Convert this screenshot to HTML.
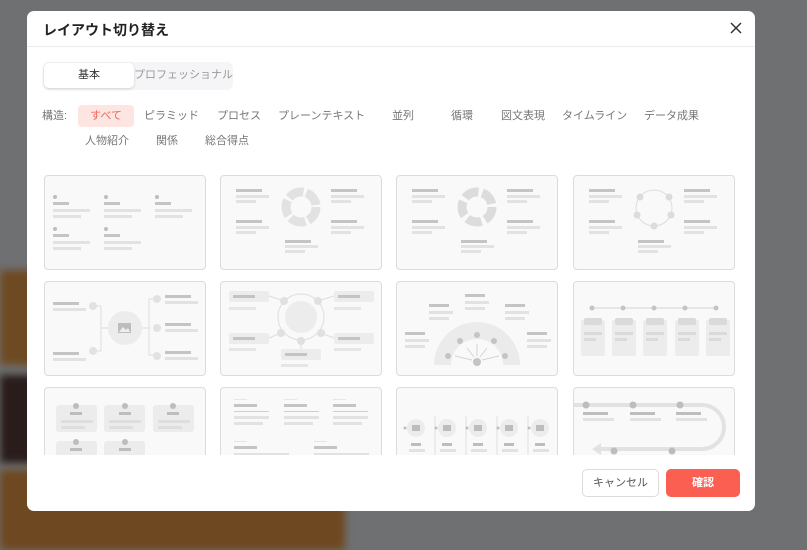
<!DOCTYPE html>
<html><head><meta charset="utf-8"><style>
*{margin:0;padding:0;box-sizing:border-box}
body{width:807px;height:546px;overflow:hidden;position:relative;background:#6f7072;font-family:"Liberation Sans","Noto Sans CJK JP",sans-serif}
.bg{position:absolute;filter:blur(4px)}
.modal{position:absolute;left:27px;top:11px;width:728px;height:500px;background:#fff;border-radius:7px;overflow:hidden}
.title{position:absolute;left:16px;top:9px;font-size:14px;font-weight:bold;color:#222}
.close{position:absolute;left:702px;top:10px}
.hr{position:absolute;left:0;top:35px;width:728px;height:1px;background:#ececec}
.tabs{position:absolute;left:16px;top:51px;width:190px;height:28px;background:#f5f5f7;border-radius:6px}
.tab1{position:absolute;left:1px;top:1px;width:90px;height:25px;background:#fff;border-radius:5px;box-shadow:0 1px 3px rgba(0,0,0,.15);font-size:11px;color:#333;text-align:center;line-height:25px}
.tab2{position:absolute;left:91px;top:0;font-size:11px;color:#999;line-height:27px}
.f{position:absolute;font-size:11px;color:#777;line-height:22px;white-space:nowrap}
.sel{background:#fde5e1;color:#f0675a;border-radius:4px;width:56px;text-align:center}
.grid{position:absolute;left:0;top:160px;width:728px;height:284px;overflow:hidden}
.card{position:absolute;width:162px;height:95px;background:#f9f9f9;border:1px solid #dcdcdc;border-radius:4px;overflow:hidden}
.card svg{position:absolute;left:0;top:0}
.btn{position:absolute;top:458px;height:28px;border-radius:5px;font-size:11px;text-align:center;line-height:26px}
</style></head><body>
<div class="bg" style="left:0;top:270px;width:40px;height:95px;background:#6e4a22"></div>
<div class="bg" style="left:0;top:375px;width:40px;height:88px;background:#2a1c1a"></div>
<div class="bg" style="left:0;top:470px;width:345px;height:80px;background:#6e4820"></div>

<div class="modal">
<div class="title">レイアウト切り替え</div>
<svg class="close" width="14" height="14" viewBox="0 0 14 14"><path d="M2 2L12 12M12 2L2 12" stroke="#333" stroke-width="1.5"/></svg>
<div class="hr"></div>
<div class="tabs"><div class="tab1">基本</div><div class="tab2">プロフェッショナル</div></div>
<div class="f" style="left:15px;top:94px">構造:</div>
<div class="f sel" style="left:51px;top:94px">すべて</div>
<div class="f" style="left:117px;top:94px">ピラミッド</div>
<div class="f" style="left:190px;top:94px">プロセス</div>
<div class="f" style="left:251px;top:94px">プレーンテキスト</div>
<div class="f" style="left:365px;top:94px">並列</div>
<div class="f" style="left:424px;top:94px">循環</div>
<div class="f" style="left:474px;top:94px">図文表現</div>
<div class="f" style="left:535px;top:94px">タイムライン</div>
<div class="f" style="left:617px;top:94px">データ成果</div>
<div class="f" style="left:58px;top:119px">人物紹介</div>
<div class="f" style="left:129px;top:119px">関係</div>
<div class="f" style="left:178px;top:119px">総合得点</div>

<div class="grid">
<!-- row1 -->
<div class="card" style="left:17px;top:4px"><svg width="162" height="95">
<g fill="#bdbdbd"><circle cx="10" cy="21" r="2"/><circle cx="61" cy="21" r="2"/><circle cx="112" cy="21" r="2"/><circle cx="10" cy="53" r="2"/><circle cx="61" cy="53" r="2"/></g>
<g fill="#c4c4c4"><rect x="8" y="26" width="16" height="3"/><rect x="59" y="26" width="16" height="3"/><rect x="110" y="26" width="16" height="3"/><rect x="8" y="58" width="16" height="3"/><rect x="59" y="58" width="16" height="3"/></g>
<g fill="#e2e2e2"><rect x="8" y="33" width="37" height="3"/><rect x="8" y="39" width="28" height="3"/><rect x="59" y="33" width="37" height="3"/><rect x="59" y="39" width="28" height="3"/><rect x="110" y="33" width="37" height="3"/><rect x="110" y="39" width="28" height="3"/><rect x="8" y="65" width="37" height="3"/><rect x="8" y="71" width="28" height="3"/><rect x="59" y="65" width="37" height="3"/><rect x="59" y="71" width="28" height="3"/></g></svg></div>

<div class="card" style="left:193px;top:4px"><svg width="162" height="95">
<g fill="#c4c4c4"><rect x="15" y="13" width="26" height="3"/><rect x="15" y="44" width="26" height="3"/><rect x="110" y="13" width="26" height="3"/><rect x="110" y="44" width="26" height="3"/><rect x="64" y="64" width="26" height="3"/></g>
<g fill="#e2e2e2"><rect x="15" y="19" width="33" height="3"/><rect x="15" y="24" width="20" height="3"/><rect x="15" y="50" width="33" height="3"/><rect x="15" y="55" width="20" height="3"/><rect x="110" y="19" width="33" height="3"/><rect x="110" y="24" width="20" height="3"/><rect x="110" y="50" width="33" height="3"/><rect x="110" y="55" width="20" height="3"/><rect x="64" y="69" width="33" height="3"/><rect x="64" y="74" width="20" height="3"/></g>
<circle cx="80" cy="31" r="15" fill="none" stroke="#e2e2e2" stroke-width="9" stroke-dasharray="16 3"/></svg></div>

<div class="card" style="left:369px;top:4px"><svg width="162" height="95">
<g fill="#c4c4c4"><rect x="15" y="13" width="26" height="3"/><rect x="15" y="44" width="26" height="3"/><rect x="110" y="13" width="26" height="3"/><rect x="110" y="44" width="26" height="3"/><rect x="64" y="64" width="26" height="3"/></g>
<g fill="#e2e2e2"><rect x="15" y="19" width="33" height="3"/><rect x="15" y="24" width="20" height="3"/><rect x="15" y="50" width="33" height="3"/><rect x="15" y="55" width="20" height="3"/><rect x="110" y="19" width="33" height="3"/><rect x="110" y="24" width="20" height="3"/><rect x="110" y="50" width="33" height="3"/><rect x="110" y="55" width="20" height="3"/><rect x="64" y="69" width="33" height="3"/><rect x="64" y="74" width="20" height="3"/></g>
<circle cx="80" cy="31" r="15" fill="none" stroke="#dcdcdc" stroke-width="9" stroke-dasharray="15 4"/></svg></div>

<div class="card" style="left:546px;top:4px"><svg width="162" height="95">
<g fill="#c4c4c4"><rect x="15" y="13" width="26" height="3"/><rect x="15" y="44" width="26" height="3"/><rect x="110" y="13" width="26" height="3"/><rect x="110" y="44" width="26" height="3"/><rect x="64" y="64" width="26" height="3"/></g>
<g fill="#e2e2e2"><rect x="15" y="19" width="33" height="3"/><rect x="15" y="24" width="20" height="3"/><rect x="15" y="50" width="33" height="3"/><rect x="15" y="55" width="20" height="3"/><rect x="110" y="19" width="33" height="3"/><rect x="110" y="24" width="20" height="3"/><rect x="110" y="50" width="33" height="3"/><rect x="110" y="55" width="20" height="3"/><rect x="64" y="69" width="33" height="3"/><rect x="64" y="74" width="20" height="3"/></g>
<circle cx="80" cy="32" r="18" fill="none" stroke="#ddd" stroke-width="1"/>
<g fill="#dcdcdc"><circle cx="66" cy="21" r="3.5"/><circle cx="95" cy="21" r="3.5"/><circle cx="63" cy="39" r="3.5"/><circle cx="97" cy="39" r="3.5"/><circle cx="80" cy="50" r="3.5"/></g></svg></div>

<!-- row2 -->
<div class="card" style="left:17px;top:110px"><svg width="162" height="95">
<g fill="#c4c4c4"><rect x="8" y="20" width="26" height="3"/><rect x="8" y="70" width="26" height="3"/><rect x="120" y="13" width="26" height="3"/><rect x="120" y="41" width="26" height="3"/><rect x="120" y="69" width="26" height="3"/></g>
<g fill="#e2e2e2"><rect x="8" y="26" width="33" height="3"/><rect x="8" y="76" width="33" height="3"/><rect x="120" y="19" width="33" height="3"/><rect x="120" y="47" width="33" height="3"/><rect x="120" y="75" width="33" height="3"/></g>
<path d="M48 24H56V69H48M56 46H64M96 46H104M112 17H104V73H112" fill="none" stroke="#ddd"/>
<g fill="#e2e2e2"><circle cx="48" cy="24" r="4"/><circle cx="48" cy="69" r="4"/><circle cx="112" cy="17" r="4"/><circle cx="112" cy="46" r="4"/><circle cx="112" cy="74" r="4"/></g>
<circle cx="80" cy="46" r="17" fill="#ececec"/><rect x="73" y="41" width="13" height="10" fill="#bdbdbd"/><path d="M74 50L78 45L81 48L83 46L85 50Z" fill="#eee"/></svg></div>

<div class="card" style="left:193px;top:110px"><svg width="162" height="95">
<g fill="#ececec"><rect x="8" y="9" width="40" height="11" rx="2"/><rect x="8" y="51" width="40" height="11" rx="2"/><rect x="113" y="9" width="40" height="11" rx="2"/><rect x="113" y="51" width="40" height="11" rx="2"/><rect x="60" y="67" width="40" height="11" rx="2"/></g>
<g fill="#c4c4c4"><rect x="12" y="13" width="22" height="3"/><rect x="12" y="55" width="22" height="3"/><rect x="117" y="13" width="22" height="3"/><rect x="117" y="55" width="22" height="3"/><rect x="64" y="71" width="22" height="3"/></g>
<g fill="#e6e6e6"><rect x="8" y="25" width="27" height="3"/><rect x="8" y="66" width="27" height="3"/><rect x="113" y="25" width="27" height="3"/><rect x="113" y="66" width="27" height="3"/><rect x="60" y="82" width="27" height="3"/></g>
<path d="M48 14L63 19M113 14L97 19M48 56L60 51M113 56L100 51M80 62V67" stroke="#ddd"/>
<circle cx="80" cy="35" r="23" fill="none" stroke="#ddd"/><circle cx="80" cy="35" r="16" fill="#ececec"/>
<g fill="#e0e0e0"><circle cx="63" cy="19" r="4"/><circle cx="97" cy="19" r="4"/><circle cx="60" cy="51" r="4"/><circle cx="100" cy="51" r="4"/><circle cx="80" cy="59" r="4"/></g></svg></div>

<div class="card" style="left:369px;top:110px"><svg width="162" height="95">
<path d="M37 83A43 43 0 0 1 123 83H106A26 26 0 0 0 54 83Z" fill="#ebebeb"/>
<g fill="#c4c4c4"><rect x="68" y="12" width="20" height="3"/><rect x="32" y="22" width="20" height="3"/><rect x="108" y="22" width="20" height="3"/><rect x="8" y="50" width="20" height="3"/><rect x="130" y="50" width="20" height="3"/></g>
<g fill="#e2e2e2"><rect x="68" y="19" width="24" height="3"/><rect x="68" y="25" width="20" height="3"/><rect x="32" y="29" width="24" height="3"/><rect x="32" y="35" width="20" height="3"/><rect x="108" y="29" width="24" height="3"/><rect x="108" y="35" width="20" height="3"/><rect x="8" y="57" width="24" height="3"/><rect x="8" y="63" width="20" height="3"/><rect x="130" y="57" width="24" height="3"/><rect x="130" y="63" width="20" height="3"/></g>
<g fill="#c4c4c4"><circle cx="51" cy="74" r="3"/><circle cx="63" cy="59" r="3"/><circle cx="80" cy="53" r="3"/><circle cx="97" cy="59" r="3"/><circle cx="108" cy="74" r="3"/><circle cx="80" cy="80" r="4"/></g>
<path d="M75 78L58 74M77 75L70 66M80 74V62M83 75L90 66M85 78L102 74" stroke="#d4d4d4"/></svg></div>

<div class="card" style="left:546px;top:110px"><svg width="162" height="95">
<path d="M18 26H143" stroke="#d4d4d4"/>
<g fill="#c4c4c4"><circle cx="18" cy="26" r="2.5"/><circle cx="49" cy="26" r="2.5"/><circle cx="80" cy="26" r="2.5"/><circle cx="111" cy="26" r="2.5"/><circle cx="142" cy="26" r="2.5"/></g>
<g fill="#ececec"><rect x="7" y="38" width="24" height="36" rx="2"/><rect x="38" y="38" width="24" height="36" rx="2"/><rect x="69" y="38" width="24" height="36" rx="2"/><rect x="101" y="38" width="24" height="36" rx="2"/><rect x="132" y="38" width="24" height="36" rx="2"/></g>
<g fill="#dadada"><rect x="10" y="36" width="18" height="7" rx="2"/><rect x="41" y="36" width="18" height="7" rx="2"/><rect x="72" y="36" width="18" height="7" rx="2"/><rect x="104" y="36" width="18" height="7" rx="2"/><rect x="135" y="36" width="18" height="7" rx="2"/>
<rect x="10" y="50" width="18" height="3"/><rect x="10" y="56" width="12" height="3"/><rect x="41" y="50" width="18" height="3"/><rect x="41" y="56" width="12" height="3"/><rect x="72" y="50" width="18" height="3"/><rect x="72" y="56" width="12" height="3"/><rect x="104" y="50" width="18" height="3"/><rect x="104" y="56" width="12" height="3"/><rect x="135" y="50" width="18" height="3"/><rect x="135" y="56" width="12" height="3"/></g></svg></div>

<!-- row3 -->
<div class="card" style="left:17px;top:216px"><svg width="162" height="95">
<g fill="#ececec"><rect x="11" y="17" width="41" height="27" rx="3"/><rect x="59" y="17" width="41" height="27" rx="3"/><rect x="108" y="17" width="41" height="27" rx="3"/><rect x="11" y="53" width="41" height="27" rx="3"/><rect x="59" y="53" width="41" height="27" rx="3"/></g>
<g fill="#bdbdbd"><circle cx="31" cy="18" r="3"/><circle cx="80" cy="18" r="3"/><circle cx="128" cy="18" r="3"/><circle cx="31" cy="54" r="3"/><circle cx="80" cy="54" r="3"/><rect x="25" y="24" width="12" height="3"/><rect x="74" y="24" width="12" height="3"/><rect x="122" y="24" width="12" height="3"/><rect x="25" y="60" width="12" height="3"/><rect x="74" y="60" width="12" height="3"/></g>
<g fill="#dedede"><rect x="16" y="32" width="32" height="3"/><rect x="16" y="38" width="24" height="3"/><rect x="64" y="32" width="32" height="3"/><rect x="64" y="38" width="24" height="3"/><rect x="113" y="32" width="32" height="3"/><rect x="113" y="38" width="24" height="3"/></g></svg></div>

<div class="card" style="left:193px;top:216px"><svg width="162" height="95">
<g fill="#e6e6e6"><rect x="13" y="11" width="13" height="1"/><rect x="63" y="11" width="13" height="1"/><rect x="112" y="11" width="13" height="1"/><rect x="13" y="53" width="13" height="1"/><rect x="93" y="53" width="13" height="1"/></g>
<g fill="#c4c4c4"><rect x="13" y="16" width="23" height="3"/><rect x="63" y="16" width="23" height="3"/><rect x="112" y="16" width="23" height="3"/><rect x="13" y="58" width="23" height="3"/><rect x="93" y="58" width="23" height="3"/></g>
<g fill="#cfcfcf"><rect x="13" y="23" width="35" height="1"/><rect x="63" y="23" width="35" height="1"/><rect x="112" y="23" width="35" height="1"/></g>
<g fill="#e2e2e2"><rect x="13" y="28" width="35" height="3"/><rect x="13" y="34" width="29" height="3"/><rect x="63" y="28" width="35" height="3"/><rect x="63" y="34" width="29" height="3"/><rect x="112" y="28" width="35" height="3"/><rect x="112" y="34" width="29" height="3"/><rect x="13" y="65" width="55" height="3"/><rect x="93" y="65" width="55" height="3"/></g></svg></div>

<div class="card" style="left:369px;top:216px"><svg width="162" height="95">
<path d="M38 28V70M69 28V70M100 28V70M131 28V70" stroke="#e0e0e0"/>
<g fill="#ececec"><circle cx="19" cy="40" r="9"/><circle cx="50" cy="40" r="9"/><circle cx="81" cy="40" r="9"/><circle cx="112" cy="40" r="9"/><circle cx="143" cy="40" r="9"/></g>
<g fill="#bdbdbd"><rect x="15" y="37" width="8" height="6"/><rect x="46" y="37" width="8" height="6"/><rect x="77" y="37" width="8" height="6"/><rect x="108" y="37" width="8" height="6"/><rect x="139" y="37" width="8" height="6"/>
<circle cx="8" cy="40" r="1.5"/><circle cx="39" cy="40" r="1.5"/><circle cx="70" cy="40" r="1.5"/><circle cx="101" cy="40" r="1.5"/><circle cx="132" cy="40" r="1.5"/>
<rect x="14" y="55" width="10" height="3"/><rect x="45" y="55" width="10" height="3"/><rect x="76" y="55" width="10" height="3"/><rect x="107" y="55" width="10" height="3"/><rect x="138" y="55" width="10" height="3"/></g>
<g fill="#e2e2e2"><rect x="12" y="61" width="16" height="3"/><rect x="43" y="61" width="16" height="3"/><rect x="74" y="61" width="16" height="3"/><rect x="105" y="61" width="16" height="3"/><rect x="136" y="61" width="16" height="3"/></g></svg></div>

<div class="card" style="left:546px;top:216px"><svg width="162" height="95">
<path d="M0 17H128A22 22 0 0 1 128 61H26" fill="none" stroke="#e2e2e2" stroke-width="4"/>
<path d="M18 61L27 55V67Z" fill="#e2e2e2"/>
<g fill="#bdbdbd"><circle cx="12" cy="17" r="3.5"/><circle cx="59" cy="17" r="3.5"/><circle cx="106" cy="17" r="3.5"/><circle cx="40" cy="63" r="3.5"/><circle cx="98" cy="63" r="3.5"/>
<rect x="9" y="24" width="25" height="3"/><rect x="56" y="24" width="25" height="3"/><rect x="102" y="24" width="25" height="3"/></g>
<g fill="#e2e2e2"><rect x="9" y="30" width="31" height="3"/><rect x="56" y="30" width="31" height="3"/><rect x="102" y="30" width="31" height="3"/></g></svg></div>
</div>

<div class="btn" style="left:555px;width:77px;border:1px solid #dcdcdc;color:#555;background:#fff">キャンセル</div>
<div class="btn" style="left:639px;width:74px;background:#fa5f52;color:#fff;font-weight:bold;line-height:28px">確認</div>
</div>
</body></html>
